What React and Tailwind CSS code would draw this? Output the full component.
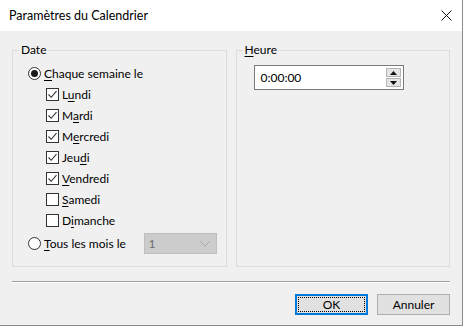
import React from 'react';

const days = [
  { pre: 'L', key: 'u', post: 'ndi', checked: true },
  { pre: 'M', key: 'a', post: 'rdi', checked: true },
  { pre: 'M', key: 'e', post: 'rcredi', checked: true },
  { pre: 'Jeu', key: 'd', post: 'i', checked: true },
  { pre: '', key: 'V', post: 'endredi', checked: true },
  { pre: '', key: 'S', post: 'amedi', checked: false },
  { pre: 'D', key: 'i', post: 'manche', checked: false },
];

const Radio = ({ checked }) => (
  <span className="w-[13px] h-[13px] rounded-full border border-[#333] bg-white flex items-center justify-center shrink-0">
    {checked && <span className="w-[7px] h-[7px] rounded-full bg-[#1a1a1a]" />}
  </span>
);

const Checkbox = ({ checked }) => (
  <span className="w-[13px] h-[13px] border border-[#333] bg-white flex items-center justify-center shrink-0">
    {checked && (
      <svg width="11" height="11" viewBox="0 0 11 11">
        <path d="M1.5 5.5 L4.2 8.3 L9.5 2.2" fill="none" stroke="#333" strokeWidth="1.1" />
      </svg>
    )}
  </span>
);

const Label = ({ pre, k, post }) => (
  <span>
    {pre}
    <u className="underline-offset-2">{k}</u>
    {post}
  </span>
);

export default function App() {
  return (
    <div className="w-[463px] h-[326px] bg-[#f0f0f0] border-r border-b border-[#8a8a8a] flex flex-col text-[12px] text-black font-['Lato',sans-serif] leading-[16px]">
      <div className="h-[31px] bg-white flex items-center justify-between pl-[9px] pr-[10px] shrink-0">
        <span className="text-[12.5px]">Paramètres du Calendrier</span>
        <svg width="11" height="11" viewBox="0 0 11 11">
          <path d="M0.5 0.5 L10.5 10.5 M10.5 0.5 L0.5 10.5" stroke="#111" strokeWidth="1" />
        </svg>
      </div>

      <div className="flex gap-[9px] px-[12px] mt-[11px]">
        <fieldset className="w-[216px] h-[225px] border border-[#dcdcdc] px-0">
          <legend className="ml-[6px] px-[2px]">Date</legend>
          <div className="flex flex-col pl-[15px] mt-[5px]">
            <div className="h-[21px] flex items-center gap-[3px]">
              <Radio checked />
              <Label pre="" k="C" post="haque semaine le" />
            </div>
            {days.map((d) => (
              <div key={d.pre + d.post} className="h-[21px] flex items-center gap-[3px] pl-[18px]">
                <Checkbox checked={d.checked} />
                <Label pre={d.pre} k={d.key} post={d.post} />
              </div>
            ))}
            <div className="h-[21px] mt-[2px] flex items-center gap-[3px]">
              <Radio />
              <Label pre="" k="T" post="ous les mois le" />
              <div className="ml-auto mr-[9px] w-[73px] h-[21px] bg-[#cccccc] border border-[#bfbfbf] flex items-center justify-between pl-[4px] pr-[6px] text-[#6d6d6d]">
                <span>1</span>
                <svg width="10" height="6" viewBox="0 0 10 6">
                  <path d="M0.5 0.5 L5 5 L9.5 0.5" fill="none" stroke="#a8a8a8" strokeWidth="1" />
                </svg>
              </div>
            </div>
          </div>
        </fieldset>

        <fieldset className="w-[216px] h-[225px] border border-[#dcdcdc] px-0">
          <legend className="ml-[6px] px-[2px]">
            <Label pre="" k="H" post="eure" />
          </legend>
          <div className="pl-[17px] mt-[7px]">
            <div className="w-[150px] h-[25px] bg-white border border-[#7a7a7a] flex items-center justify-between pl-[6px] pr-[2px]">
              <span>0:00:00</span>
              <div className="flex flex-col gap-[1px]">
                <div className="w-[15px] h-[9px] bg-[#e5e5e5] border border-[#b4b4b4] flex items-center justify-center">
                  <svg width="7" height="4" viewBox="0 0 7 4">
                    <path d="M0 4 L3.5 0 L7 4 Z" fill="#111" />
                  </svg>
                </div>
                <div className="w-[15px] h-[9px] bg-[#e5e5e5] border border-[#b4b4b4] flex items-center justify-center">
                  <svg width="7" height="4" viewBox="0 0 7 4">
                    <path d="M0 0 L3.5 4 L7 0 Z" fill="#111" />
                  </svg>
                </div>
              </div>
            </div>
          </div>
        </fieldset>
      </div>

      <div className="mx-[12px] mt-[14px] border-t border-[#a0a0a0] border-b border-b-white w-[438px]" />

      <div className="flex justify-end gap-[9px] pr-[12px] mt-[11px]">
        <button className="w-[73px] h-[21px] bg-[#e1e1e1] border-2 border-[#0078d7] flex items-center justify-center p-[1px]">
          <span className="w-full h-full border border-dotted border-black flex items-center justify-center">OK</span>
        </button>
        <button className="w-[73px] h-[21px] bg-[#e1e1e1] border border-[#adadad] flex items-center justify-center">
          Annuler
        </button>
      </div>
    </div>
  );
}
